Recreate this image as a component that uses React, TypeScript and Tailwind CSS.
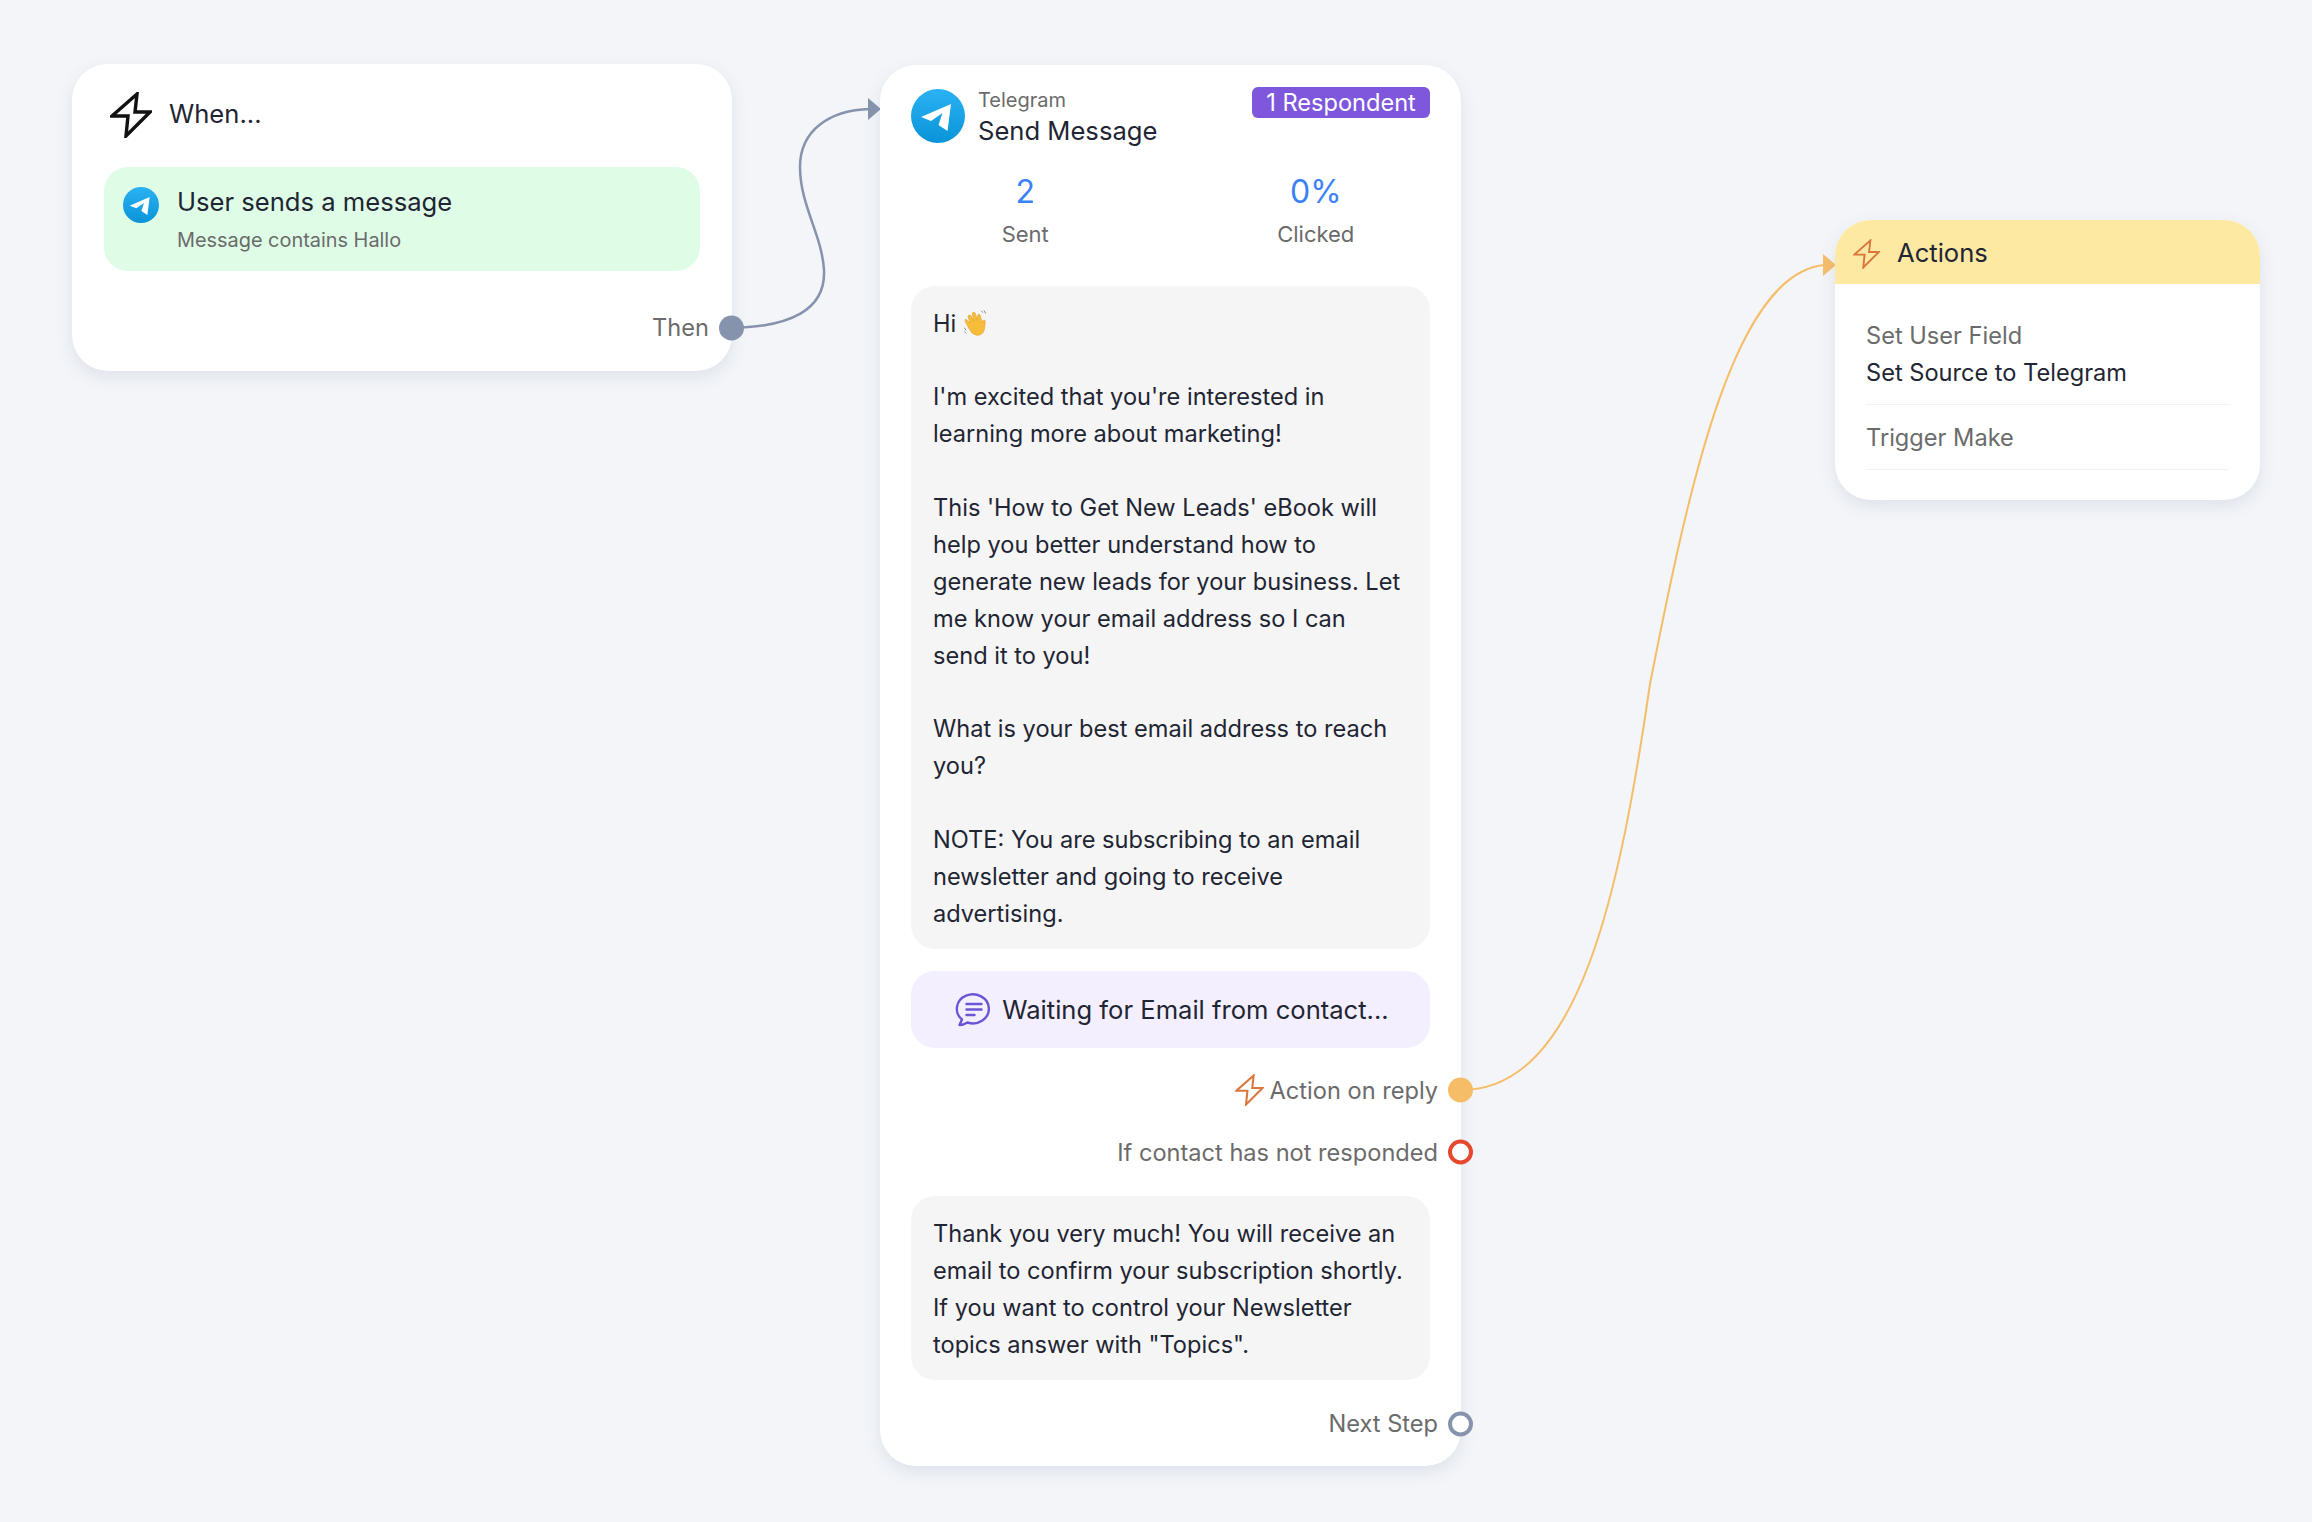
import React from "react";

const font = "font-['Inter','Noto_Sans',sans-serif]";

const Bolt: React.FC<{ className: string; stroke: string; width?: number }> = ({ className, stroke, width = 3 }) => (
  <svg viewBox="-2 -2 42 46" fill="none" className={className} stroke={stroke} strokeWidth={width} strokeLinejoin="miter">
    <path d="M25 0 L23 18 L38 18 L14 42 L16 22 L0 22 Z" />
  </svg>
);

const TelegramIcon: React.FC<{ className: string; id: string }> = ({ className, id }) => (
  <svg viewBox="0 0 54 54" className={className}>
    <defs>
      <linearGradient id={id} x1="0" y1="0" x2="0" y2="1">
        <stop offset="0" stopColor="#2ab2f3" />
        <stop offset="1" stopColor="#0a93d8" />
      </linearGradient>
    </defs>
    <circle cx="27" cy="27" r="27" fill={`url(#${id})`} />
    <path d="M10 28 L40 15 L36.5 42 L27.5 36 L31.5 24 L20 32 Z" fill="#fff" />
  </svg>
);

const WaveHand: React.FC = () => (
  <svg viewBox="0 0 26 30" className="inline-block w-[25px] h-[28px] align-[-5px] ml-[7px]">
    <path d="M3 11 L7 15 L5 8 Q5.5 5.5 8 7 L11 13 L9.5 5 Q10 2.5 12.5 4 L15 12 L15 7 Q16 4.5 18 6.5 L20 14 L21.5 12 Q24 11.5 23.5 14.5 L22.5 22 Q20.5 29 14 28 Q9 27.5 6 21 L2 13.5 Q1.5 10.5 3 11 Z" fill="#f6bd3b" stroke="#e39a1f" strokeWidth="0.6" />
    <path d="M19 2 L21 4 M22 1.5 L24 5 M1 20 L3 23 M1 24 L3 26" stroke="#8a8a8a" strokeWidth="1" fill="none" />
  </svg>
);

const Dot: React.FC<{ className: string }> = ({ className }) => (
  <span className={`absolute right-[-12px] top-1/2 -translate-y-1/2 w-[25px] h-[25px] rounded-full ${className}`} />
);

const Outlet: React.FC<{ label: string; dot: string; className: string; icon?: boolean }> = ({ label, dot, className, icon }) => (
  <div className={`relative flex items-center justify-end pr-[23px] text-[23.6px] text-[#6b6b6b] ${className}`}>
    {icon && <Bolt className="w-[29px] h-[32px] mr-[6px]" stroke="#d9773d" />}
    <span>{label}</span>
    <Dot className={dot} />
  </div>
);

const Para: React.FC<{ lines: string[] }> = ({ lines }) => (
  <p className="mb-[36.9px] last:mb-0">
    {lines.map((l) => (
      <span key={l} className="block whitespace-nowrap">{l}</span>
    ))}
  </p>
);

export default function App() {
  return (
    <div className={`relative w-[2312px] h-[1522px] overflow-hidden bg-[#f3f5f8] text-[#1f2533] ${font}`}>
      {/* connectors */}
      <svg className="absolute left-0 top-0 w-[2312px] h-[1522px]" viewBox="0 0 2312 1522" fill="none">
        <path d="M731 328 C 790 327, 826 310, 824 270 C 822 235, 800 205, 800 167 C 800 130, 830 110, 870 109" stroke="#8593ad" strokeWidth="2.5" />
        <path d="M868 98 L881 109 L868 120 Z" fill="#8593ad" />
        <path d="M1461 1090 C 1580 1090, 1620 890, 1650 684 C 1690 480, 1735 272, 1825 265" stroke="#f6bd69" strokeWidth="2" />
        <path d="M1823 254 L1836 265 L1823 276 Z" fill="#f6bd69" />
      </svg>

      {/* trigger node */}
      <div className="absolute left-[72px] top-[64px] w-[660px] h-[307px] rounded-[36px] bg-white shadow-[0_6px_16px_rgba(130,145,175,0.18)] px-[32px]">
        <div className="flex items-center h-[103px] -mt-[1px] pl-[6px]">
          <Bolt className="w-[42px] h-[46px]" stroke="#111111" width={3.4} />
          <span className="ml-[17px] text-[25.6px]">When...</span>
        </div>
        <div className="mt-[1px] flex h-[104px] rounded-[24px] bg-[#dffde6] pl-[19px] pt-[20px]">
          <TelegramIcon id="tg-a" className="w-[36px] h-[36px] shrink-0" />
          <div className="ml-[18px] -mt-[4px]">
            <div className="text-[25.6px] leading-[38px]">User sends a message</div>
            <div className="text-[19.9px] leading-[38px] text-[#6b6b6b]">Message contains Hallo</div>
          </div>
        </div>
        <div className="absolute right-0 top-[249px] h-[30px]">
          <Outlet label="Then" dot="bg-[#8593ad]" className="h-[30px]" />
        </div>
      </div>

      {/* message node */}
      <div className="absolute left-[880px] top-[65px] w-[581px] h-[1401px] rounded-[36px] bg-white shadow-[0_6px_16px_rgba(130,145,175,0.18)]">
        <div className="relative flex px-[31px] pt-[24px]">
          <TelegramIcon id="tg-b" className="w-[54px] h-[54px] shrink-0" />
          <div className="ml-[13px] -mt-[2px]">
            <div className="text-[20px] leading-[26px] text-[#6b6b6b]">Telegram</div>
            <div className="text-[25.6px] leading-[36px]">Send Message</div>
          </div>
          <span className="ml-auto -mt-[2px] h-[31px] w-[178px] rounded-[6px] bg-[#7e57dc] text-center text-[23.6px] leading-[31px] text-white">
            1 Respondent
          </span>
        </div>
        <div className="grid grid-cols-2 text-center mt-[23px]">
          <div>
            <div className="text-[32px] leading-[40px] text-[#3b82f6]">2</div>
            <div className="text-[22px] leading-[30px] mt-[7px] text-[#6b6b6b]">Sent</div>
          </div>
          <div>
            <div className="text-[32px] leading-[40px] text-[#3b82f6]">0%</div>
            <div className="text-[22px] leading-[30px] mt-[7px] text-[#6b6b6b]">Clicked</div>
          </div>
        </div>
        <div className="mx-[31px] mt-[37px] rounded-[24px] bg-[#f5f5f6] px-[22px] pt-[19.5px] pb-[16.5px] text-[23.6px] leading-[36.9px]">
          <p className="mb-[36.9px]">Hi<WaveHand /></p>
          <Para lines={["I'm excited that you're interested in", "learning more about marketing!"]} />
          <Para lines={["This 'How to Get New Leads' eBook will", "help you better understand how to", "generate new leads for your business. Let", "me know your email address so I can", "send it to you!"]} />
          <Para lines={["What is your best email address to reach", "you?"]} />
          <Para lines={["NOTE: You are subscribing to an email", "newsletter and going to receive", "advertising."]} />
        </div>
        <div className="mx-[31px] mt-[22px] flex h-[77px] items-center justify-center rounded-[24px] bg-[#f3effe] text-[25.6px]">
          <svg viewBox="0 0 36 34" className="w-[37px] h-[34px] mr-[10px] ml-[3px]" fill="none" stroke="#6d53d6" strokeWidth="2.4" strokeLinecap="round">
            <path d="M4 32 L6.5 26.5 A16 14.5 0 1 1 12 29.5 Q8 32 4 32 Z" strokeLinejoin="round" />
            <path d="M11 11 H26 M11 16.5 H26 M11 22 H19" />
          </svg>
          <span>Waiting for Email from contact...</span>
        </div>
        <Outlet icon label="Action on reply" dot="bg-[#f6bd69]" className="mt-[27px] h-[30px]" />
        <Outlet label="If contact has not responded" dot="border-[4px] border-[#e5482d] bg-white" className="mt-[32px] h-[30px]" />
        <div className="mx-[31px] mt-[29px] rounded-[24px] bg-[#f5f5f6] px-[22px] pt-[20px] pb-[16px] text-[23.6px] leading-[36.9px]">
          <Para lines={["Thank you very much! You will receive an", "email to confirm your subscription shortly.", "If you want to control your Newsletter", 'topics answer with "Topics".']} />
        </div>
        <Outlet label="Next Step" dot="border-[4px] border-[#8593ad] bg-white" className="mt-[29px] h-[30px]" />
      </div>

      {/* actions node */}
      <div className="absolute left-[1835px] top-[220px] w-[425px] h-[280px] rounded-[36px] bg-white shadow-[0_6px_16px_rgba(130,145,175,0.18)] overflow-hidden">
        <div className="flex h-[64px] items-center bg-[#fee9a3] pl-[18px] pt-[3px]">
          <Bolt className="w-[27px] h-[30px]" stroke="#d9773d" />
          <span className="ml-[17px] text-[25.6px]">Actions</span>
        </div>
        <div className="px-[31px] pt-[33px] text-[23.6px]">
          <div className="leading-[37px] text-[#6b6b6b]">Set User Field</div>
          <div className="leading-[37px]">Set Source to Telegram</div>
          <div className="mt-[13px] border-b border-[#f1f2f4]" />
          <div className="mt-[14px] leading-[37px] text-[#6b6b6b]">Trigger Make</div>
          <div className="mt-[13px] border-b border-[#f1f2f4]" />
        </div>
      </div>
    </div>
  );
}
